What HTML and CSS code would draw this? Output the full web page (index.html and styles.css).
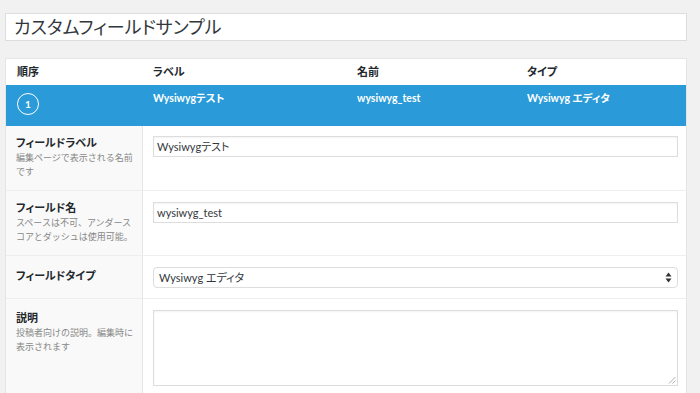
FILE: index.html
```html
<!DOCTYPE html>
<html lang="ja">
<head>
<meta charset="utf-8">
<link rel="stylesheet" href="styles.css">
</head>
<body>
<div class="page">
  <div class="title-box">カスタムフィールドサンプル</div>
  <div class="panel">
    <div class="thead">
      <div class="c1">順序</div>
      <div class="c2">ラベル</div>
      <div class="c3">名前</div>
      <div class="c4">タイプ</div>
    </div>
    <div class="active-row">
      <div class="c1"><span class="order">1</span></div>
      <div class="c2">Wysiwygテスト</div>
      <div class="c3">wysiwyg_test</div>
      <div class="c4">Wysiwyg エディタ</div>
    </div>
    <div class="frow r1">
      <div class="fl">
        <div class="fname">フィールドラベル</div>
        <div class="fdesc">編集ページで表示される名前です</div>
      </div>
      <div class="fv"><div class="input">Wysiwygテスト</div></div>
    </div>
    <div class="frow r2">
      <div class="fl">
        <div class="fname">フィールド名</div>
        <div class="fdesc">スペースは不可、アンダースコアとダッシュは使用可能。</div>
      </div>
      <div class="fv"><div class="input">wysiwyg_test</div></div>
    </div>
    <div class="frow r3">
      <div class="fl">
        <div class="fname">フィールドタイプ</div>
      </div>
      <div class="fv">
        <div class="select">
          <span>Wysiwyg エディタ</span>
          <svg class="arrows" width="7" height="11" viewBox="0 0 7 11"><path d="M3.5 0.5 L6.5 4.5 H0.5 Z M3.5 10.5 L6.5 6.5 H0.5 Z" fill="#333"/></svg>
        </div>
      </div>
    </div>
    <div class="frow r4">
      <div class="fl">
        <div class="fname">説明</div>
        <div class="fdesc">投稿者向けの説明。編集時に表示されます</div>
      </div>
      <div class="fv">
        <div class="textarea">
          <svg class="grip" width="8" height="8" viewBox="0 0 8 8"><path d="M7.5 1 L1 7.5 M7.5 4.5 L4.5 7.5" stroke="#999" stroke-width="0.8"/></svg>
        </div>
      </div>
    </div>
  </div>
</div>
</body>
</html>
```
FILE: styles.css
```css
html, body {
  margin: 0;
  padding: 0;
  background: #f1f1f1;
  font-family: Lato, "Noto Sans CJK JP", sans-serif;
  font-feature-settings: "palt";
  color: #23282d;
}
.page {
  padding: 13px 13px 0 5px;
}
.title-box {
  height: 26px;
  border: 1px solid #dddddd;
  background: #fff;
  font-size: 18px;
  line-height: 26px;
  padding-left: 8px;
  color: #32373c;
}
.panel {
  margin-top: 17px;
  background: #fff;
  border: 1px solid #e5e5e5;
  border-bottom: none;
}
.thead, .active-row {
  display: grid;
  grid-template-columns: 147px 204px 170px 1fr;
}
.thead {
  height: 26px;
  font-size: 11px;
  font-weight: bold;
  line-height: 26px;
  color: #23282d;
}
.thead .c1 { padding-left: 11px; }
.active-row {
  height: 41px;
  background: #2a9bd8;
  color: #fff;
  font-size: 10.5px;
  font-weight: bold;
}
.active-row > div {
  padding-top: 6px;
  line-height: 14px;
}
.active-row .c1 {
  padding: 8px 0 0 11px;
}
.order {
  display: flex;
  align-items: center;
  justify-content: center;
  width: 20px;
  height: 20px;
  border: 1px solid #fff;
  border-radius: 50%;
  font-size: 10px;
  line-height: 1;
}
.frow {
  display: flex;
  border-top: 1px solid #eeeeee;
}
.active-row + .frow { border-top: none; }
.fl {
  width: 120px;
  flex: none;
  background: #f9f9f9;
  border-right: 1px solid #e5e5e5;
  padding: 10px 6px 0 10px;
}
.fname {
  font-size: 11px;
  font-weight: bold;
  line-height: 14px;
  color: #23282d;
}
.fdesc {
  font-size: 9px;
  font-feature-settings: normal;
  line-height: 14px;
  color: #888;
  margin-top: 1px;
}
.fv {
  flex: 1;
  padding: 10px 8px 0 10px;
}
.r1 { height: 64px; }
.r2 { height: 64px; }
.r3 { height: 42px; }
.r4 { height: 100px; }
.r2 .fv { padding-top: 11px; }
.r3 .fv { padding-top: 11px; }
.r3 .fl { padding-top: 13px; }
.r4 .fv { padding-top: 11px; }
.r4 .fl { padding-top: 12px; }
.input {
  height: 19px;
  border: 1px solid #dddddd;
  box-shadow: inset 0 1px 2px rgba(0,0,0,0.05);
  font-size: 11px;
  line-height: 19px;
  padding-left: 3px;
  color: #32373c;
}
.select {
  height: 19px;
  border: 1px solid #dddddd;
  border-radius: 4px;
  font-size: 11px;
  line-height: 19px;
  padding: 0 5px 0 5px;
  display: flex;
  justify-content: space-between;
  align-items: center;
  color: #32373c;
}
.textarea {
  height: 74px;
  border: 1px solid #dddddd;
  box-shadow: inset 0 1px 2px rgba(0,0,0,0.05);
  position: relative;
}
.grip {
  position: absolute;
  right: 1px;
  bottom: 1px;
}
```
